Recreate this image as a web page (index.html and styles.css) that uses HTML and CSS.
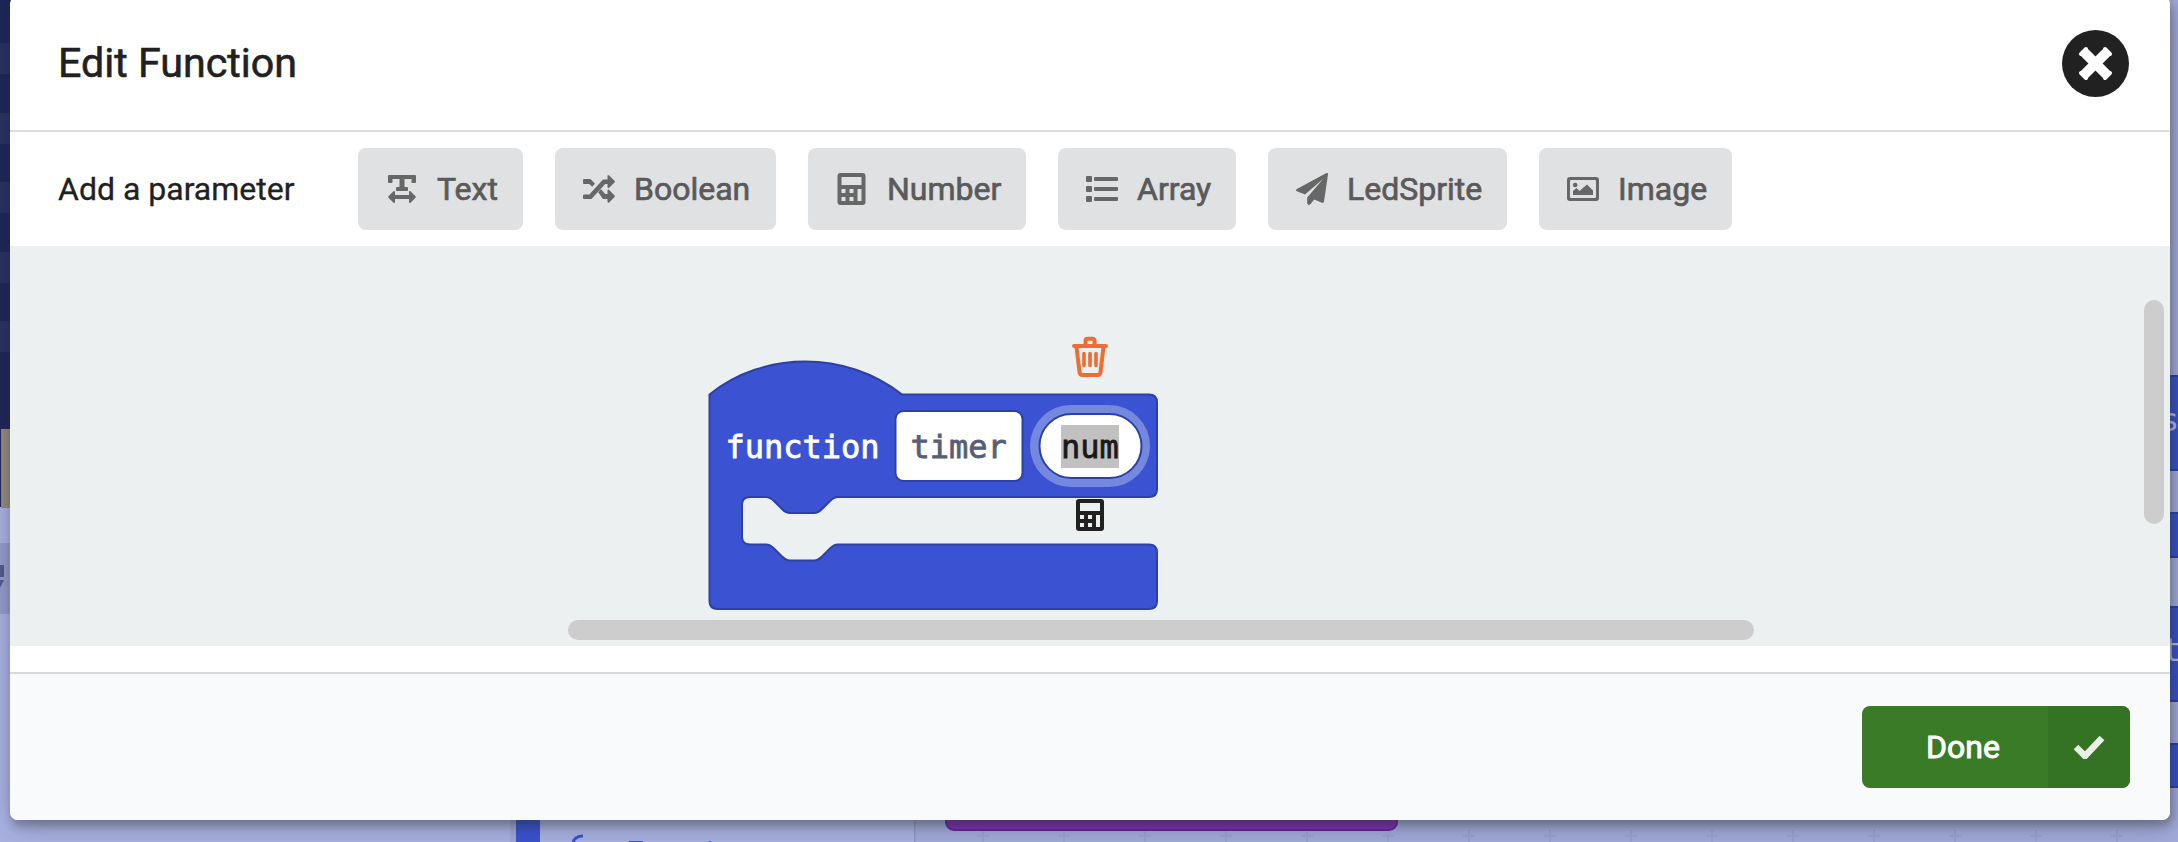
FILE: index.html
```html
<!DOCTYPE html>
<html lang="en">
<head>
<meta charset="utf-8">
<title>Edit Function</title>
<link rel="stylesheet" href="styles.css">
</head>
<body>
<svg class="backdrop" width="2178" height="842" viewBox="0 0 2178 842" aria-hidden="true">
  <rect width="2178" height="842" fill="#a9b2e3"/>
  <rect width="20" height="507" fill="#1f2758"/>
  <g fill="#293162">
    <rect y="43" width="20" height="31"/><rect y="113" width="20" height="31"/><rect y="182" width="20" height="31"/><rect y="252" width="20" height="31"/><rect y="321" width="20" height="31"/>
  </g>
  <rect x="1" y="429" width="20" height="79" fill="#938a7d"/>
  <rect y="543" width="20" height="71" fill="#949ccb"/>
  <path d="M0 565h4v12H0zM0 580h4l-4 8z" fill="#515a91"/>
  <rect x="510" y="800" width="6" height="42" fill="#a0a8d6"/>
  <rect x="516" y="800" width="24" height="42" fill="#3a53d0"/>
  <path d="M573 843c1-5 4-7 10-7" fill="none" stroke="#3a53d0" stroke-width="3"/>
  <text class="category" x="626" y="863">Functions</text>
  <rect x="914" width="1264" height="842" fill="#a2abdc"/>
  <rect x="914" y="800" width="1.5" height="42" fill="#8e97c8"/>
  <path d="M983 830v12M977 836h12M1064 830v12M1058 836h12M1145 830v12M1139 836h12M1226 830v12M1220 836h12M1307 830v12M1301 836h12M1388 834v8M1382 836h12M1469 830v12M1463 836h12M1550 830v12M1544 836h12M1631 830v12M1625 836h12M1712 830v12M1706 836h12M1793 830v12M1787 836h12M1874 830v12M1868 836h12M1955 830v12M1949 836h12M2036 830v12M2030 836h12M2117 830v12M2111 836h12" stroke="#99a2d4" stroke-width="2"/>
  <rect x="946" y="780" width="451" height="50" rx="8" fill="#7d30b3" stroke="#66279a" stroke-width="2"/>
  <g fill="#3850c8" stroke="#2c3fa4" stroke-width="2">
    <rect x="2100" y="376" width="90" height="94"/><rect x="2100" y="513" width="90" height="44"/><rect x="2100" y="607" width="90" height="94"/><rect x="2100" y="744" width="90" height="43"/>
  </g>
  <text class="ghost" x="2160" y="431">s</text>
  <text class="ghost" x="2162" y="661">t</text>
</svg>

<main class="modal">
  <header class="header">
    <h1 class="title">Edit Function</h1>
    <svg class="close" viewBox="0 0 67 67"><circle cx="33.5" cy="33.5" r="33.5" fill="#212121"/><path d="M21.2 21.2 45.8 45.8M45.8 21.2 21.2 45.8" stroke="#fff" stroke-width="10"/><path d="M24 19 19 24M43 19l5 5M24 48l-5-5M43 48l5-5" stroke="#fff" stroke-width="4" stroke-linecap="round"/></svg>
  </header>

  <section class="params">
    <span class="label">Add a parameter</span>
    <button class="param text"><svg class="icon" viewBox="0 0 32 32"><path d="M3 2h26a1 1 0 0 1 1 1v6a1 1 0 0 1-1 1h-2.500a1 1 0 0 1-1-1V6h-7v8h2.500a1 1 0 0 1 1 1v2a1 1 0 0 1-1 1h-10a1 1 0 0 1-1-1v-2a1 1 0 0 1 1-1H13.500V6h-7v3a1 1 0 0 1-1 1H3a1 1 0 0 1-1-1V3a1 1 0 0 1 1-1zM2.500 23.300 7.500 18.300Q9 17.500 9 19.300V22h14v-2.700Q23 17.500 24.500 18.300l5 5q.7.700 0 1.400l-5 5Q23 30.500 23 28.700V26H9v2.700Q9 30.500 7.500 29.700l-5-5q-.7-.7 0-1.400z"/></svg><span>Text</span></button>
    <button class="param boolean"><svg class="icon" viewBox="0 0 32 32"><path d="M1 6h6.500L12 10.800 9.200 13.800 6.300 10.900H1A1 1 0 0 1 0 10V7a1 1 0 0 1 1-1zM0 22.500a1 1 0 0 1 1-1h5.300L20 6.500h4.500V3.200q0-2 1.700-.8l5.300 5.400q.8.800 0 1.600l-5.300 5.400q-1.700 1-1.700-.8V11h-2.300L8.500 26H1a1 1 0 0 1-1-1zM15.200 19.200 18 16.200l4.200 4.900h2.300v-3.300q0-2 1.700-.8l5.300 5.400q.8.800 0 1.600l-5.300 5.400q-1.700 1-1.700-.8V26H20z"/></svg><span>Boolean</span></button>
    <button class="param number"><svg class="icon" viewBox="0 0 32 32"><path fill-rule="evenodd" d="M3 0h22q3 0 3 3v26q0 3-3 3H3q-3 0-3-3V3q0-3 3-3zM4 4v8h20V4zM4 16v4h4v-4zM12 16v4h4v-4zM20 16v12h4V16zM4 24v4h4v-4zM12 24v4h4v-4z" transform="translate(1.500 0)"/></svg><span>Number</span></button>
    <button class="param array"><svg class="icon" viewBox="0 0 32 32"><rect y="3" width="6" height="6" rx="1"/><rect y="13" width="6" height="6" rx="1"/><rect y="23" width="6" height="6" rx="1"/><rect x="8" y="4" width="24" height="4" rx="1"/><rect x="8" y="14" width="24" height="4" rx="1"/><rect x="8" y="24" width="24" height="4" rx="1"/></svg><span>Array</span></button>
    <button class="param sprite"><svg class="icon" viewBox="0 0 32 32"><path d="M30 .3q2.200-1 2 1.300L28 28.500q-.3 1.800-2 1.200l-7.800-3.200-3.800 4.700Q12 33 11.200 30v-5.600L27 6 9 21.500.900 18.200q-1.800-1 0-2.200z"/></svg><span>LedSprite</span></button>
    <button class="param image"><svg class="icon" viewBox="0 0 32 32"><path fill-rule="evenodd" d="M3 4h26q3 0 3 3v18q0 3-3 3H3q-3 0-3-3V7q0-3 3-3zM4 7Q3 7 3 8v16q0 1 1 1h24q1 0 1-1V8q0-1-1-1zM6 22v-4l3.500-3 3 3 7.500-6.500 6 6V22z"/><circle cx="8.200" cy="12" r="2.300"/></svg><span>Image</span></button>
  </section>

  <section class="workspace">
    <svg class="canvas" viewBox="0 0 2160 400">
      <g transform="translate(-10 -246)">
        <path d="M709.500 394.500C764 350.500 846 350.500 902 394.500H1149q8 0 8 8V489q0 8-8 8H838c-4 0-6 2-8 4l-8 8c-2 2-4 4-8 4h-24c-4 0-6-2-8-4l-8-8c-2-2-4-4-8-4h-16q-8 0-8 8v31.500q0 8 8 8h16c4 0 6 2 8 4l8 8c2 2 4 4 8 4h24c4 0 6-2 8-4l8-8c2-2 4-4 8-4H1149q8 0 8 8V601q0 8-8 8H717.500q-8 0-8-8z" fill="#3b53d3" stroke="#2d40a5" stroke-width="2"/>
        <text class="code" x="725.500" y="457.500" fill="#fff" stroke="#fff">function</text>
        <rect x="895.500" y="411" width="127" height="70" rx="8" fill="#fff" stroke="#2d40a5" stroke-width="2"/>
        <text class="code" x="910.500" y="457.500" fill="#575e75" stroke="#575e75">timer</text>
        <rect x="1030" y="405" width="120" height="82" rx="41" fill="#7588e0"/>
        <rect x="1039.500" y="414" width="102" height="64" rx="32" fill="#fff" stroke="#2d40a5" stroke-width="2"/>
        <rect x="1061" y="425" width="58" height="43" fill="#c1c1c1"/>
        <text class="code" x="1061" y="457.500" fill="#191919" stroke="#191919">num</text>
        <g fill="none" stroke="#ed6e33" stroke-linecap="round" stroke-linejoin="round"><path d="M1074 346h32M1085.500 345v-4q0-2.200 2.200-2.200h4.600q2.200 0 2.200 2.200v4M1076.500 347l3 25q.3 3 3 3h15q2.700 0 3-3l3-25" stroke-width="4"/><path d="M1084 353.500v12M1090 353.500v12M1096 353.500v12" stroke-width="3.600"/></g>
        <path fill="#212121" fill-rule="evenodd" d="M3 0h22q3 0 3 3v26q0 3-3 3H3q-3 0-3-3V3q0-3 3-3zM4 4v8h20V4zM4 16v4h4v-4zM12 16v4h4v-4zM20 16v12h4V16zM4 24v4h4v-4zM12 24v4h4v-4z" transform="translate(1076 499)"/>
        <rect x="568" y="620" width="1186" height="20" rx="10" fill="#cdcdcd"/>
        <rect x="2144" y="300" width="20" height="224" rx="10" fill="#cdcdcd"/>
      </g>
    </svg>
  </section>

  <footer class="footer">
    <button class="done"><span class="done-label">Done</span><span class="done-icon"><svg class="check" viewBox="0 0 32 24"><path d="M3 12l9 9L29 3" fill="none" stroke="#ebf1e9" stroke-width="6.500"/></svg></span></button>
  </footer>
</main>
</body>
</html>
```
FILE: styles.css
```css
* { box-sizing: border-box; }
html { height: 842px; overflow: hidden; }
body { margin: 0; padding-top: 1px; width: 2178px; height: 842px; overflow: hidden; font-family: Roboto, sans-serif; color: #212121; }
button { border: 0; margin: 0; padding: 0; font: inherit; }
.backdrop { position: absolute; left: 0; top: 0; z-index: -1; }
.category { font: 32px Roboto, sans-serif; fill: #3a53d0; }
.ghost { font: 32px "DejaVu Sans Mono", monospace; fill: #b4bce4; }
.modal { display: flex; flex-direction: column; width: 2160px; height: 824px; margin: -5px 8px 0 10px; background: #fff; border-radius: 8px; overflow: hidden; box-shadow: 2px 6px 8px 0 rgba(34,36,38,.3), 2px 6px 30px 0 rgba(34,36,38,.28); }
.header { display: flex; align-items: center; justify-content: space-between; height: 136px; padding: 0 41px 0 48px; border-bottom: 2px solid #dcdcdd; }
.title { margin: 0; font-size: 41.2px; font-weight: 400; -webkit-text-stroke: .6px #212121; line-height: 48px; }
.close { width: 67px; height: 67px; }
.params { display: flex; align-items: center; gap: 32px; height: 114px; padding-left: 48px; }
.label { width: 268px; font-size: 32px; -webkit-text-stroke: .3px #212121; }
.param { display: flex; align-items: center; gap: 19px; height: 82px; padding-left: 28px; border-radius: 8px; background: #e0e1e2; color: #5a5a5a; font-size: 32px; -webkit-text-stroke: .7px #5a5a5a; }
.icon { width: 32px; height: 32px; fill: #666767; flex: none; }
.text { width: 165px; }
.boolean { width: 221px; }
.number { width: 218px; }
.array { width: 178px; }
.sprite { width: 239px; }
.image { width: 193px; }
.workspace { height: 400px; background: #ecf0f1; }
.canvas { display: block; width: 2160px; height: 400px; }
.code { font: 32px "DejaVu Sans Mono", monospace; stroke-width: .8px; }
.footer { display: flex; justify-content: flex-end; align-items: flex-start; margin-top: 26px; height: 148px; padding: 32px 40px 0 0; border-top: 2px solid #d7d8da; background: #f9fafb; }
.done { display: flex; width: 268px; height: 82px; border-radius: 8px; overflow: hidden; background: #3a7b27; color: #fff; font-size: 32px; -webkit-text-stroke: .9px #fff; }
.done-label { width: 186px; display: flex; align-items: center; justify-content: flex-end; padding-right: 48px; }
.done-icon { width: 82px; display: flex; align-items: center; justify-content: center; background: #357324; }
.check { width: 32px; height: 24px; }
```
